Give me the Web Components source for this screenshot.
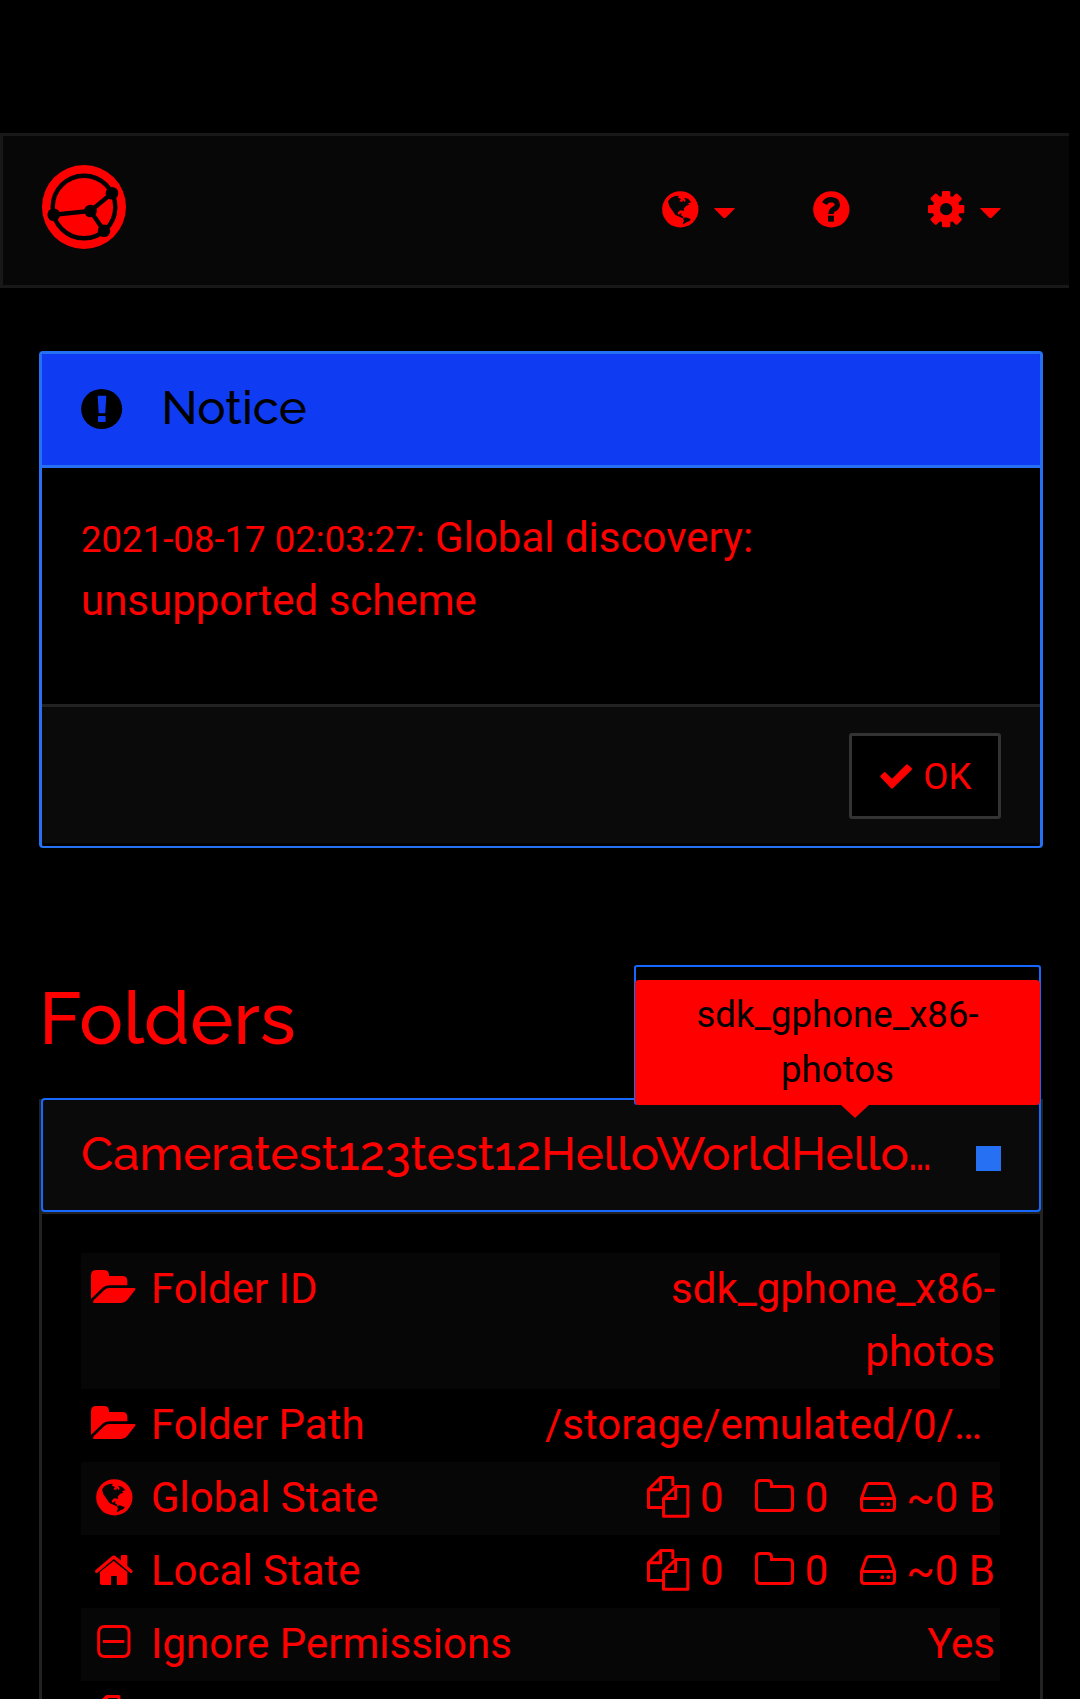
<!DOCTYPE html>
<html lang="en">
<head>
<meta charset="utf-8">
<title>Syncthing</title>
<style>
html,body{margin:0;background:#000;height:1699px;overflow:hidden}
body{font-family:Roboto,"Liberation Sans",sans-serif;font-size:42px;line-height:63px;color:#f00;width:1080px}
</style>
</head>
<body>
<sync-page></sync-page>
<script>
const ICONS = {
  globe: [110,110,13,'<circle cx="55" cy="55" r="54.5"/><path fill="var(--cut,#070707)" d="M18 31L26 21L39 15L50 14L48 20L57 24L52 31L61 33L63 27L68 34L71 28L66 20L78 23L88 34L78 36L82 41L73 44L65 53L67 59L54 58L47 65L49 71L59 66L57 73L65 78L62 82L49 76L40 72L30 57L22 46Z M63 82L71 79L86 84L83 90L73 94L65 100L62 97L66 90Z"/>'],
  help: [110,110,13,'<circle cx="55" cy="55" r="54.5"/><path fill="none" stroke="var(--cut,#070707)" stroke-width="16" d="M34 38Q41 26 54 26Q73 27 73 41Q73 49 63 54Q54 59 54 69"/><path fill="var(--cut,#070707)" d="M45 74h18v18h-18z"/>'],
  gear: [109,109,13,'<circle cx="54.500" cy="54.500" r="41"/><rect x="42" width="25" height="109" rx="4"/><rect x="42" width="25" height="109" rx="4" transform="rotate(90 54.500 54.500)"/><rect x="42" y="-2" width="25" height="113" rx="5" transform="rotate(45 54.500 54.500)"/><rect x="42" y="-2" width="25" height="113" rx="5" transform="rotate(135 54.500 54.500)"/><circle cx="54.500" cy="54.500" r="18.500" fill="var(--cut,#070707)"/>'],
  caret: [63,30,0,'<path d="M2 0H61Q64 0 61 3L35 29Q31.500 31 28 29L2 3Q-1 0 2 0Z"/>'],
  alert: [124,120,0,'<ellipse cx="62" cy="60" rx="61.500" ry="60"/><path fill="#0f3cf2" d="M50 22Q50 20 52 20H74Q76 20 76 22L73 71Q73 73 71 73H55Q53 73 53 71ZM51 83Q51 81 53 81H72Q74 81 74 83V97Q74 99 72 99H53Q51 99 51 97Z"/>'],
  check: [97,75,0,'<path stroke="currentColor" stroke-width="8" stroke-linejoin="round" d="M5 37L14 28L36 50L81 5L92 15L36 70Z"/>'],
  open: [138,99,13,'<path d="M0 85V16Q0 0 16 0H39Q54 0 54 16V18H94Q109 18 109 33V46H55Q42 46 34 54L3 84Q0 88 0 85Z"/><path d="M8 91L40 60Q46 54 55 54H129Q136 54 132 60L108 91Q101 99 91 99H10Q3 99 8 91Z"/>'],
  home: [113,90,16,'<path fill="none" stroke="currentColor" stroke-width="10" stroke-linecap="round" stroke-linejoin="round" d="M5 49L53 8Q56.500 5 60 8L108 49"/><path d="M78 3Q78 0 81 0H94Q97 0 97 3V38L78 22ZM15 51L56 18L97 51V84Q97 90 91 90H66V63H48V90H21Q15 90 15 84Z"/>'],
  minus: [101,99,13,'<rect x="5" y="4.500" width="91" height="90" rx="17" fill="none" stroke="currentColor" stroke-width="9"/><path d="M18 45h64v9H18z"/>'],
  files: [127,126,10,'<path fill="none" stroke="currentColor" stroke-width="9" stroke-linejoin="round" d="M46 94.500H4.500V41L41 4.500H77.500V30M41 4.500V41H4.500M49.500 121H122.500V31.500H86L49.500 67.500ZM86 31.500V67.500H49.500"/>'],
  folder: [117,99,13,'<path fill="none" stroke="currentColor" stroke-width="9" d="M4.500 16Q4.500 4.500 16 4.500H38Q49.500 4.500 49.500 16V22.500H101Q112.500 22.500 112.500 34V83Q112.500 94.500 101 94.500H16Q4.500 94.500 4.500 83Z"/>'],
  disk: [108,90,16,'<path fill="none" stroke="currentColor" stroke-width="9" stroke-linejoin="round" d="M4.500 49.500L18 12Q21 4.500 28 4.500H80Q87 4.500 90 12L103.500 49.500V76Q103.500 85.500 95 85.500H13Q4.500 85.500 4.500 76ZM4.500 49.500H103.500"/><circle cx="67" cy="66.500" r="5.500"/><circle cx="85" cy="66.500" r="5.500"/>']
};
function define(name, html){
  customElements.define(name, class extends HTMLElement{
    constructor(){
      super();
      const t=document.createElement('template');
      t.innerHTML=html;
      this.attachShadow({mode:'open'}).append(t.content.cloneNode(true));
    }
  });
}
customElements.define('sync-icon', class extends HTMLElement{
  connectedCallback(){
    if(this.shadowRoot) return;
    const [w,h,top,body]=ICONS[this.getAttribute('name')];
    const off=this.hasAttribute('inline')?top:0;
    this.attachShadow({mode:'open'}).innerHTML=`<style>:host{display:block;flex:none;line-height:0}svg{display:block;fill:currentColor;margin-top:${off}px;overflow:visible}</style><svg width="${w/3}" height="${h/3}" viewBox="0 0 ${w} ${h}">${body}</svg>`;
  }
});
define('sync-logo', `<style>:host{display:block;width:84px;height:84px}svg{display:block}</style>
<svg width="84" height="84" viewBox="0 0 84 84"><circle cx="42" cy="42" r="42" fill="#f00"/><g fill="none" stroke="#000" stroke-width="4.400"><circle cx="42" cy="42" r="31.300"/><path d="M70 28.300L48.500 46L11.700 49.700M48.500 46L62 65.700"/></g><g><circle cx="70" cy="28.300" r="6.300"/><circle cx="48.500" cy="46" r="6.300"/><circle cx="11.700" cy="49.700" r="6.300"/><circle cx="62" cy="65.700" r="6.300"/></g></svg>`);
define('sync-navbar', `<style>
:host{display:flex;flex:none;box-sizing:border-box;width:1069px;height:155px;background:#070707;border:3px solid #181818;border-right:0;padding:29px 68px 0 39px;align-items:flex-start}
.menu{display:flex;margin:26px 0 0 auto;align-items:flex-start}
.item{display:flex;gap:15px}
.item sync-icon[name=caret]{margin-top:17px}
.item+.item{margin-left:78.5px}.item:last-child{margin-left:78px;gap:16px}
</style><sync-logo></sync-logo>
<div class="menu"><div class="item"><sync-icon name="globe"></sync-icon><sync-icon name="caret"></sync-icon></div>
<div class="item"><sync-icon name="help"></sync-icon></div>
<div class="item"><sync-icon name="gear"></sync-icon><sync-icon name="caret"></sync-icon></div></div>`);
define('sync-button', `<style>:host{display:flex;box-sizing:border-box;width:152px;height:86px;border:3px solid #333;border-radius:3px;background:#000;font-size:36.6px;line-height:54px;padding:14px 0 0 28px;gap:11px}
sync-icon{margin-top:14px}</style><sync-icon name="check"></sync-icon><span><slot></slot></span>`);
define('sync-notice', `<style>
:host{display:block;box-sizing:border-box;border:3px solid #2670f4;border-bottom-width:2px;border-radius:4px;height:497px;overflow:hidden}
header{display:flex;height:111px;background:#0f3cf2;border-bottom:3px solid #2670f4;color:#000;font-family:Raleway,Lato,sans-serif;font-weight:500;font-size:47.3px;line-height:54px;box-sizing:content-box}
header sync-icon{margin:35px 0 0 39px}
header span{margin:27px 0 0 39px}
.body{height:236px;box-sizing:border-box;padding:38px 39px 0 39px}
footer{display:flex;justify-content:flex-end;background:#0a0a0a;border-top:3px solid #222;height:139px;padding:26px 39px 0 0;box-sizing:border-box}
</style><header><sync-icon name="alert"></sync-icon><span><slot name="title"></slot></span></header>
<div class="body"><slot></slot></div><footer><sync-button>OK</sync-button></footer>`);
define('sync-tooltip', `<style>
:host{display:block;box-sizing:border-box;border:2px solid #1768ff;border-bottom:0;border-radius:3px;padding-top:13px;height:140px}
.tip{margin:0 -1px;background:#f00;color:#000;border-radius:4px;height:125px;box-sizing:border-box;padding:7px 50px 0;text-align:center;font-size:36.6px;line-height:55px;position:relative}
.tip::after{content:"";position:absolute;left:206px;top:100%;border:14px solid transparent;border-top:13px solid #f00;border-bottom:0}
</style><div class="tip"><slot></slot></div>`);
define('sync-stat', `<style>:host{display:flex;gap:11px}:host(:last-child){gap:10px;margin-left:1px}</style><slot name="icon"></slot><span><slot></slot></span>`);
define('sync-row', `<style>
:host{display:flex;box-sizing:border-box;padding:4px 5px 6px 6px;min-height:73px;--cut:#000}
:host(:nth-child(even)){background:#060606;--cut:#060606}
.ico{display:flex;justify-content:center;width:54px;margin-right:10px;flex:none}
.val{margin-left:auto;display:flex;gap:31px;text-align:right}
</style><div class="ico"><slot name="icon"></slot></div><div><slot name="label"></slot></div><div class="val"><slot></slot></div>`);
define('sync-folder-panel', `<style>
:host{display:block;box-sizing:border-box;border:solid #222;border-width:0 3px;height:620px;position:relative}
.head{display:flex;height:112px;background:#0a0a0a;outline:2px solid #1768ff;outline-offset:-1px;border-radius:3px;position:relative;font-family:Raleway,Lato,sans-serif;font-weight:500;font-size:47.3px;line-height:54px}
.head span{margin:28px 0 0 39px;white-space:nowrap;width:853px}
.sq{width:25px;height:25px;background:#2670f4;margin:47px 39px 0 auto}
.rows{border-top:3px solid #222;padding:39px 40px 0 39px}
sync-tooltip{position:absolute;left:592px;top:-134px;width:407px}
</style><div class="head"><span><slot name="title"></slot></span><div class="sq"></div></div><div class="rows"><slot></slot></div><sync-tooltip>sdk_gphone_x86-<br>photos</sync-tooltip>`);
define('sync-page', `<style>
:host{display:flex;flex-direction:column;padding-top:133px;box-sizing:border-box;height:1699px;overflow:hidden}
main{padding:63px 37px 0 39px}
small{font-size:36.6px;line-height:1}
h2{font:500 73.2px/80px Raleway,Lato,sans-serif;margin:122px 0 0;height:129px;box-sizing:border-box;padding-top:8px}
.path{margin-right:13px}
</style><sync-navbar></sync-navbar><main>
<sync-notice><span slot="title">Notice</span><small>2021-08-17 02:03:27:</small> <span>Global discovery:</span><br><span>unsupported scheme</span></sync-notice>
<h2>Folders</h2>
<sync-folder-panel><span slot="title">Cameratest123test12HelloWorldHello…</span>
<sync-row><sync-icon inline slot="icon" name="open"></sync-icon><span slot="label">Folder ID</span><span>sdk_gphone_x86-<br>photos</span></sync-row>
<sync-row><sync-icon inline slot="icon" name="open"></sync-icon><span slot="label">Folder Path</span><span class="path">/storage/emulated/0/…</span></sync-row>
<sync-row><sync-icon inline slot="icon" name="globe"></sync-icon><span slot="label">Global State</span><sync-stat><sync-icon inline slot="icon" name="files"></sync-icon>0</sync-stat><sync-stat><sync-icon inline slot="icon" name="folder"></sync-icon>0</sync-stat><sync-stat><sync-icon inline slot="icon" name="disk"></sync-icon>~0 B</sync-stat></sync-row>
<sync-row><sync-icon inline slot="icon" name="home"></sync-icon><span slot="label">Local State</span><sync-stat><sync-icon inline slot="icon" name="files"></sync-icon>0</sync-stat><sync-stat><sync-icon inline slot="icon" name="folder"></sync-icon>0</sync-stat><sync-stat><sync-icon inline slot="icon" name="disk"></sync-icon>~0 B</sync-stat></sync-row>
<sync-row><sync-icon inline slot="icon" name="minus"></sync-icon><span slot="label">Ignore Permissions</span><span>Yes</span></sync-row>
<sync-row><sync-icon inline slot="icon" name="files"></sync-icon></sync-row>
</sync-folder-panel></main>`);
</script>
</body>
</html>
